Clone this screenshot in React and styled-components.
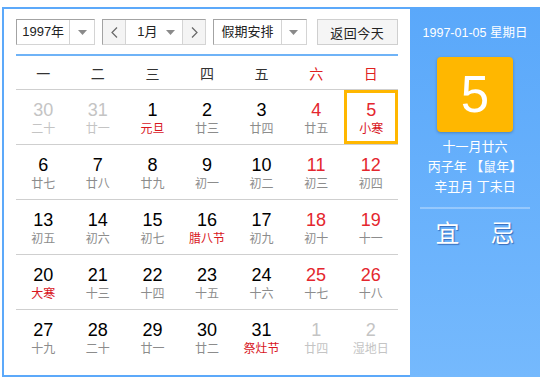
import React from "react";
import styled, { createGlobalStyle } from "styled-components";

const Global = createGlobalStyle`
  html, body { margin: 0; padding: 0; background: #fff; }
  body { font-family: "Liberation Sans", "Noto Sans CJK SC", sans-serif; }
`;

const Wrapper = styled.div`
  display: flex;
  padding: 7px 0 0 2px;
`;

const Main = styled.div`
  box-sizing: border-box;
  width: 408px;
  height: 370px;
  border: 2px solid #5ca9fa;
  border-right: none;
  padding: 10px 12px 0 12px;
`;

const Toolbar = styled.div`
  display: flex;
  height: 26px;
  align-items: stretch;
`;

const Select = styled.div`
  box-sizing: border-box;
  display: flex;
  width: ${(p) => p.$w}px;
  margin-right: ${(p) => p.$mr || 0}px;
  border: 1px solid;
  border-color: #a3a3a3 #d4d4d4 #d4d4d4 #a3a3a3;
  background: #fff;
  font-size: 13px;
  color: #222;
`;

const SelectText = styled.div`
  flex: 1;
  display: flex;
  align-items: center;
  justify-content: ${(p) => (p.$left ? "flex-start" : "center")};
  padding-left: ${(p) => p.$pl || 0}px;
  line-height: 24px;
`;

const ArrowBox = styled.div`
  width: 24px;
  display: flex;
  align-items: center;
  justify-content: center;
  border-left: ${(p) => (p.$noDivider ? "none" : "1px solid #d4d4d4")};
`;

const NavButton = styled.div`
  width: 22px;
  display: flex;
  align-items: center;
  justify-content: center;
  background: #f4f4f4;
  border-${(p) => p.$side}: 1px solid #d4d4d4;
`;

const ReturnButton = styled.div`
  box-sizing: border-box;
  width: 82px;
  border: 1px solid #cfcfcf;
  background: #f5f5f5;
  display: flex;
  align-items: center;
  justify-content: center;
  font-size: 13px;
  color: #222;
  letter-spacing: 0.5px;
`;

const BlueRule = styled.div`
  height: 2px;
  background: #6fb3f7;
  margin-top: 9px;
`;

const WeekHeader = styled.div`
  display: grid;
  grid-template-columns: repeat(7, 1fr);
  height: 33px;
  border-bottom: 1px solid #cfcfcf;
`;

const WeekDay = styled.div`
  display: flex;
  align-items: center;
  justify-content: center;
  font-size: 14px;
  color: ${(p) => (p.$red ? "#e02020" : "#333")};
`;

const Row = styled.div`
  display: grid;
  grid-template-columns: repeat(7, 1fr);
  height: 54px;
  border-bottom: ${(p) => (p.$last ? "none" : "1px solid #cfcfcf")};
`;

const Cell = styled.div`
  box-sizing: border-box;
  display: flex;
  flex-direction: column;
  align-items: center;
  padding-top: ${(p) => (p.$sel ? 7 : 10)}px;
  border: ${(p) => (p.$sel ? "3px solid #ffb700" : "none")};
  margin-left: ${(p) => (p.$sel ? 1 : 0)}px;
`;

const DayNum = styled.div`
  font-size: 18px;
  line-height: 20px;
  height: 20px;
  color: ${(p) => p.$color};
`;

const Lunar = styled.div`
  font-size: 12px;
  line-height: 18px;
  color: ${(p) => p.$color};
`;

const Side = styled.div`
  width: 130px;
  height: 370px;
  background: linear-gradient(#5aa8fa, #75b9fd);
  color: #fff;
  display: flex;
  flex-direction: column;
  align-items: center;
`;

const SideDate = styled.div`
  margin-top: 18px;
  font-size: 12.5px;
  line-height: 16px;
`;

const BigDay = styled.div`
  margin-top: 16px;
  width: 76px;
  height: 75px;
  border-radius: 4px;
  background: #ffb700;
  box-shadow: 0 1px 3px rgba(0, 0, 0, 0.25);
  display: flex;
  align-items: center;
  justify-content: center;
  font-size: 51px;
  line-height: 1;
`;

const SideLines = styled.div`
  margin-top: 5px;
  font-size: 13px;
  line-height: 20px;
  text-align: center;
`;

const SideRule = styled.div`
  margin-top: 10px;
  width: 110px;
  height: 2px;
  background: rgba(255, 255, 255, 0.3);
`;

const YiJi = styled.div`
  margin-top: 10px;
  display: flex;
  gap: 31px;
  font-size: 24px;
  line-height: 30px;
  text-shadow: 1px 1px 1px rgba(20, 60, 140, 0.6);
`;

const Caret = () => (
  <svg width="9" height="5" viewBox="0 0 9 5">
    <path d="M0 0 H9 L4.5 5 Z" fill="#8a8a8a" />
  </svg>
);

const Chevron = ({ dir }) => (
  <svg width="7" height="11" viewBox="0 0 7 11">
    <polyline
      points={dir === "left" ? "6,0.5 1,5.5 6,10.5" : "1,0.5 6,5.5 1,10.5"}
      fill="none"
      stroke="#666"
      strokeWidth="1.2"
    />
  </svg>
);

const weeks = ["一", "二", "三", "四", "五", "六", "日"];

const rows = [
  [
    { d: 30, l: "二十", o: 1 },
    { d: 31, l: "廿一", o: 1 },
    { d: 1, l: "元旦", h: 1 },
    { d: 2, l: "廿三" },
    { d: 3, l: "廿四" },
    { d: 4, l: "廿五" },
    { d: 5, l: "小寒", h: 1, sel: 1 },
  ],
  [
    { d: 6, l: "廿七" },
    { d: 7, l: "廿八" },
    { d: 8, l: "廿九" },
    { d: 9, l: "初一" },
    { d: 10, l: "初二" },
    { d: 11, l: "初三" },
    { d: 12, l: "初四" },
  ],
  [
    { d: 13, l: "初五" },
    { d: 14, l: "初六" },
    { d: 15, l: "初七" },
    { d: 16, l: "腊八节", h: 1 },
    { d: 17, l: "初九" },
    { d: 18, l: "初十" },
    { d: 19, l: "十一" },
  ],
  [
    { d: 20, l: "大寒", h: 1 },
    { d: 21, l: "十三" },
    { d: 22, l: "十四" },
    { d: 23, l: "十五" },
    { d: 24, l: "十六" },
    { d: 25, l: "十七" },
    { d: 26, l: "十八" },
  ],
  [
    { d: 27, l: "十九" },
    { d: 28, l: "二十" },
    { d: 29, l: "廿一" },
    { d: 30, l: "廿二" },
    { d: 31, l: "祭灶节", h: 1 },
    { d: 1, l: "廿四", o: 1 },
    { d: 2, l: "湿地日", o: 1 },
  ],
];

export default function App() {
  return (
    <>
      <Global />
      <Wrapper>
        <Main>
          <Toolbar>
            <Select $w={80} $mr={7}>
              <SelectText>1997年</SelectText>
              <ArrowBox>
                <Caret />
              </ArrowBox>
            </Select>
            <Select $w={105} $mr={7}>
              <NavButton $side="right">
                <Chevron dir="left" />
              </NavButton>
              <SelectText $left $pl={11}>1月</SelectText>
              <ArrowBox $noDivider>
                <Caret />
              </ArrowBox>
              <NavButton $side="left">
                <Chevron dir="right" />
              </NavButton>
            </Select>
            <Select $w={94} $mr={10}>
              <SelectText>假期安排</SelectText>
              <ArrowBox>
                <Caret />
              </ArrowBox>
            </Select>
            <ReturnButton>返回今天</ReturnButton>
          </Toolbar>
          <BlueRule />
          <WeekHeader>
            {weeks.map((w, i) => (
              <WeekDay key={w} $red={i >= 5}>
                {w}
              </WeekDay>
            ))}
          </WeekHeader>
          {rows.map((r, ri) => (
            <Row key={ri} $last={ri === rows.length - 1}>
              {r.map((c, ci) => {
                const numColor = c.o ? "#c4c4c4" : ci >= 5 ? "#e4262e" : "#000";
                const lunarColor = c.o ? "#c4c4c4" : c.h ? "#d8161e" : "#8c8c8c";
                return (
                  <Cell key={ci} $sel={c.sel}>
                    <DayNum $color={numColor}>{c.d}</DayNum>
                    <Lunar $color={lunarColor}>{c.l}</Lunar>
                  </Cell>
                );
              })}
            </Row>
          ))}
        </Main>
        <Side>
          <SideDate>1997-01-05 星期日</SideDate>
          <BigDay>5</BigDay>
          <SideLines>
            <div>十一月廿六</div>
            <div>丙子年 【鼠年】</div>
            <div>辛丑月 丁未日</div>
          </SideLines>
          <SideRule />
          <YiJi>
            <span>宜</span>
            <span>忌</span>
          </YiJi>
        </Side>
      </Wrapper>
    </>
  );
}
